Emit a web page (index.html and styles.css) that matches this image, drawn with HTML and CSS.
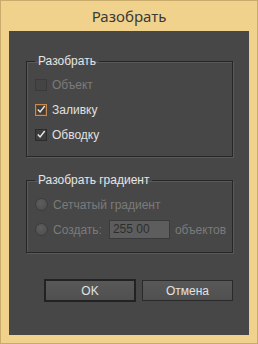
FILE: index.html
```html
<!DOCTYPE html>
<html lang="ru">
<head>
    <meta charset="UTF-8">
    <title>Разобрать</title>
    <link rel="stylesheet" href="styles.css">
</head>
<body>
    <div class="window">
        <!-- Title bar -->
        <div class="title">Разобрать</div>

        <!-- Dialog body -->
        <div class="panel">
            <fieldset class="group group-expand">
                <legend>Разобрать</legend>
                <label class="row disabled">
                    <span class="check"></span>
                    <span>Объект</span>
                </label>
                <label class="row">
                    <span class="check checked focused">
                        <svg viewBox="0 0 11 11" width="11" height="11"><path d="M2 5.5 L4.5 8.2 L9.6 1.6" fill="none" stroke="#e6e6e6" stroke-width="1.6"/></svg>
                    </span>
                    <span>Заливку</span>
                </label>
                <label class="row">
                    <span class="check checked">
                        <svg viewBox="0 0 11 11" width="11" height="11"><path d="M2 5.5 L4.5 8.2 L9.6 1.6" fill="none" stroke="#e6e6e6" stroke-width="1.6"/></svg>
                    </span>
                    <span>Обводку</span>
                </label>
            </fieldset>

            <fieldset class="group group-gradient">
                <legend>Разобрать градиент</legend>
                <label class="row disabled">
                    <span class="radio"></span>
                    <span>Сетчатый градиент</span>
                </label>
                <label class="row disabled">
                    <span class="radio"></span>
                    <span>Создать:</span>
                    <span class="field">255 00</span>
                    <span>объектов</span>
                </label>
            </fieldset>

            <div class="buttons">
                <button class="btn btn-default">OK</button>
                <button class="btn">Отмена</button>
            </div>
        </div>
    </div>
</body>
</html>
```

FILE: styles.css
```css
* {
    margin: 0;
    padding: 0;
    box-sizing: border-box;
}

body {
    font-family: 'Liberation Sans', Arial, sans-serif;
    font-size: 12px;
    background-color: #f1d28c;
}

.window {
    width: 258px;
    height: 344px;
    border: 1px solid #c9ab6b;
    background-color: #f1d28c;
}

.title {
    height: 30px;
    line-height: 30px;
    text-align: center;
    font-family: 'Noto Sans', sans-serif;
    font-size: 15px;
    color: #3a3a3a;
}

.panel {
    margin: 0 8px;
    height: 304px;
    background-color: #474747;
    padding: 23px 16px 0 17px;
    color: #dcdcdc;
}

/* Group boxes */
.group {
    border: 1px solid #262626;
    box-shadow: 1px 1px 0 #595959, inset 1px 1px 0 #595959;
    padding: 4px 0 9px 8px;
}

.group legend {
    padding: 0 3px;
    line-height: 14px;
    color: #e4e4e4;
}

.group-gradient {
    margin-top: 16px;
    padding-top: 5px;
    padding-bottom: 10px;
}

.row {
    display: flex;
    align-items: center;
    gap: 5px;
    height: 25px;
    color: #e0e0e0;
}

.row.disabled {
    color: #7b7b7b;
}

/* Checkbox */
.check {
    width: 12px;
    height: 12px;
    border: 1px solid #2b2b2b;
    background-color: #3d3d3d;
    display: flex;
    align-items: center;
    justify-content: center;
}

.disabled .check {
    border-color: #3a3a3a;
    background-color: #444;
}

.check.focused {
    border-color: #c98a4b;
    box-shadow: inset 0 0 0 1px #6b4b2d;
}

/* Radio */
.radio {
    width: 13px;
    height: 13px;
    border-radius: 50%;
    border: 1px solid #3c3c3c;
    background: radial-gradient(circle at 40% 35%, #5e5e5e, #4b4b4b);
}

.field {
    width: 61px;
    height: 19px;
    line-height: 17px;
    margin-left: 2px;
    padding-left: 3px;
    border: 1px solid #3a3a3a;
    background-color: #5d5d5d;
    color: #2d2d2d;
}

/* Buttons */
.buttons {
    display: flex;
    justify-content: flex-end;
    align-items: center;
    gap: 6px;
    margin-top: 26px;
}

.btn {
    width: 91px;
    height: 21px;
    font-family: 'Liberation Sans', Arial, sans-serif;
    font-size: 12px;
    color: #e2e2e2;
    background: linear-gradient(#585858, #505050);
    border: 1px solid #2a2a2a;
}

.btn-default {
    width: 92px;
    height: 23px;
    border: 2px solid #222;
}
```
